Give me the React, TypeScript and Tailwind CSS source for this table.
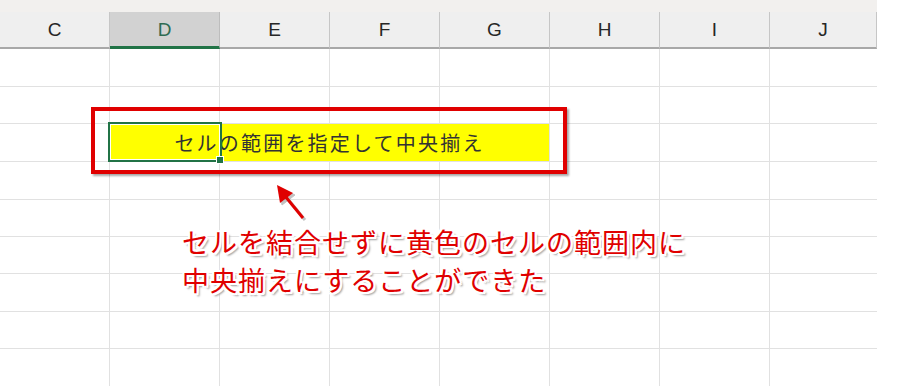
const columns = ["C", "D", "E", "F", "G", "H", "I", "J"];

const rowHeights = [
  "h-[38px]",
  "h-[37px]",
  "h-[38px]",
  "h-[38px]",
  "h-[37px]",
  "h-[37px]",
  "h-[38px]",
  "h-[37px]",
  "h-[38px]",
];

const gridCols = "grid grid-cols-[repeat(7,110px)_107px]";

function HeaderRow() {
  return (
    <div className={gridCols}>
      {columns.map((col) =>
        col === "D" ? (
          <div
            key={col}
            className="h-[37px] flex items-center justify-center bg-[#d2d2d2] border-r border-r-[#bdbdbd] border-b-[3px] border-b-[#217346] text-[#2e6b52] text-[19px] pt-[2px]"
          >
            {col}
          </div>
        ) : (
          <div
            key={col}
            className="h-[37px] flex items-center justify-center bg-[#efefef] border-r border-r-[#c6c6c6] border-b-2 border-b-[#a8a8a8] text-[#262626] text-[19px] pt-[1px]"
          >
            {col}
          </div>
        )
      )}
    </div>
  );
}

function BodyRow({ height, index }: { height: string; index: number }) {
  if (index === 2) {
    return (
      <div className={gridCols}>
        <div className={`${height} border-r border-b border-[#e1e1e1]`} />
        <div
          className={`${height} col-span-4 flex items-center justify-center bg-[#ffff00] border-r border-b border-[#e1e1e1] text-[#333333] text-[20px] tracking-[2.2px] font-['Noto_Sans_CJK_JP',sans-serif]`}
        >
          セルの範囲を指定して中央揃え
        </div>
        <div className={`${height} border-r border-b border-[#e1e1e1]`} />
        <div className={`${height} border-r border-b border-[#e1e1e1]`} />
        <div className={`${height} border-b border-[#e1e1e1]`} />
      </div>
    );
  }
  return (
    <div className={gridCols}>
      {columns.map((col, i) => (
        <div
          key={col}
          className={
            i === columns.length - 1
              ? `${height} border-b border-[#e1e1e1]`
              : `${height} border-r border-b border-[#e1e1e1]`
          }
        />
      ))}
    </div>
  );
}

export default function App() {
  return (
    <div className="relative w-[902px] h-[386px] bg-white overflow-hidden font-['Liberation_Sans',sans-serif]">
      <div className="w-[877px]">
        <div className="h-[12px] bg-[#f2f0ee]" />
        <HeaderRow />
        {rowHeights.map((h, i) => (
          <BodyRow key={i} height={h} index={i} />
        ))}
      </div>

      {/* selected cell D3 */}
      <div className="absolute left-[108px] top-[122px] w-[114px] h-[40px] border-2 border-[#217346] pointer-events-none">
        <div className="w-full h-full border border-white" />
      </div>
      <div className="absolute left-[216px] top-[156px] w-[8px] h-[8px] bg-[#217346] border border-white" />

      {/* red callout box */}
      <div className="absolute left-[91px] top-[107px] w-[476px] h-[67px] border-4 border-[#e00000] shadow-[2px_2px_2px_rgba(0,0,0,0.35)]" />

      {/* arrow */}
      <svg
        className="absolute left-[266px] top-[176px]"
        width="48"
        height="48"
        viewBox="0 0 48 48"
      >
        <g transform="translate(2 2)" fill="#9a9a9a" stroke="#9a9a9a" opacity="0.6">
          <polygon points="11,9 27,17 14,27" />
          <line x1="19" y1="20" x2="37" y2="42" strokeWidth="3" />
        </g>
        <polygon points="11,9 27,17 14,27" fill="#e00000" />
        <line x1="19" y1="20" x2="37" y2="42" stroke="#e00000" strokeWidth="3" />
      </svg>

      {/* annotation */}
      <div className="absolute left-[182px] top-[223px] text-[27px] leading-[38px] tracking-[1px] text-[#e00000] font-['Noto_Sans_CJK_JP',sans-serif] [text-shadow:-2px_-2px_0_#fff,2px_-2px_0_#fff,-2px_2px_0_#fff,2px_2px_0_#fff,0_-2px_0_#fff,0_2px_0_#fff,-2px_0_0_#fff,2px_0_0_#fff,3px_3px_2px_#9a9a9a]">
        <div>セルを結合せずに黄色のセルの範囲内に</div>
        <div>中央揃えにすることができた</div>
      </div>
    </div>
  );
}
